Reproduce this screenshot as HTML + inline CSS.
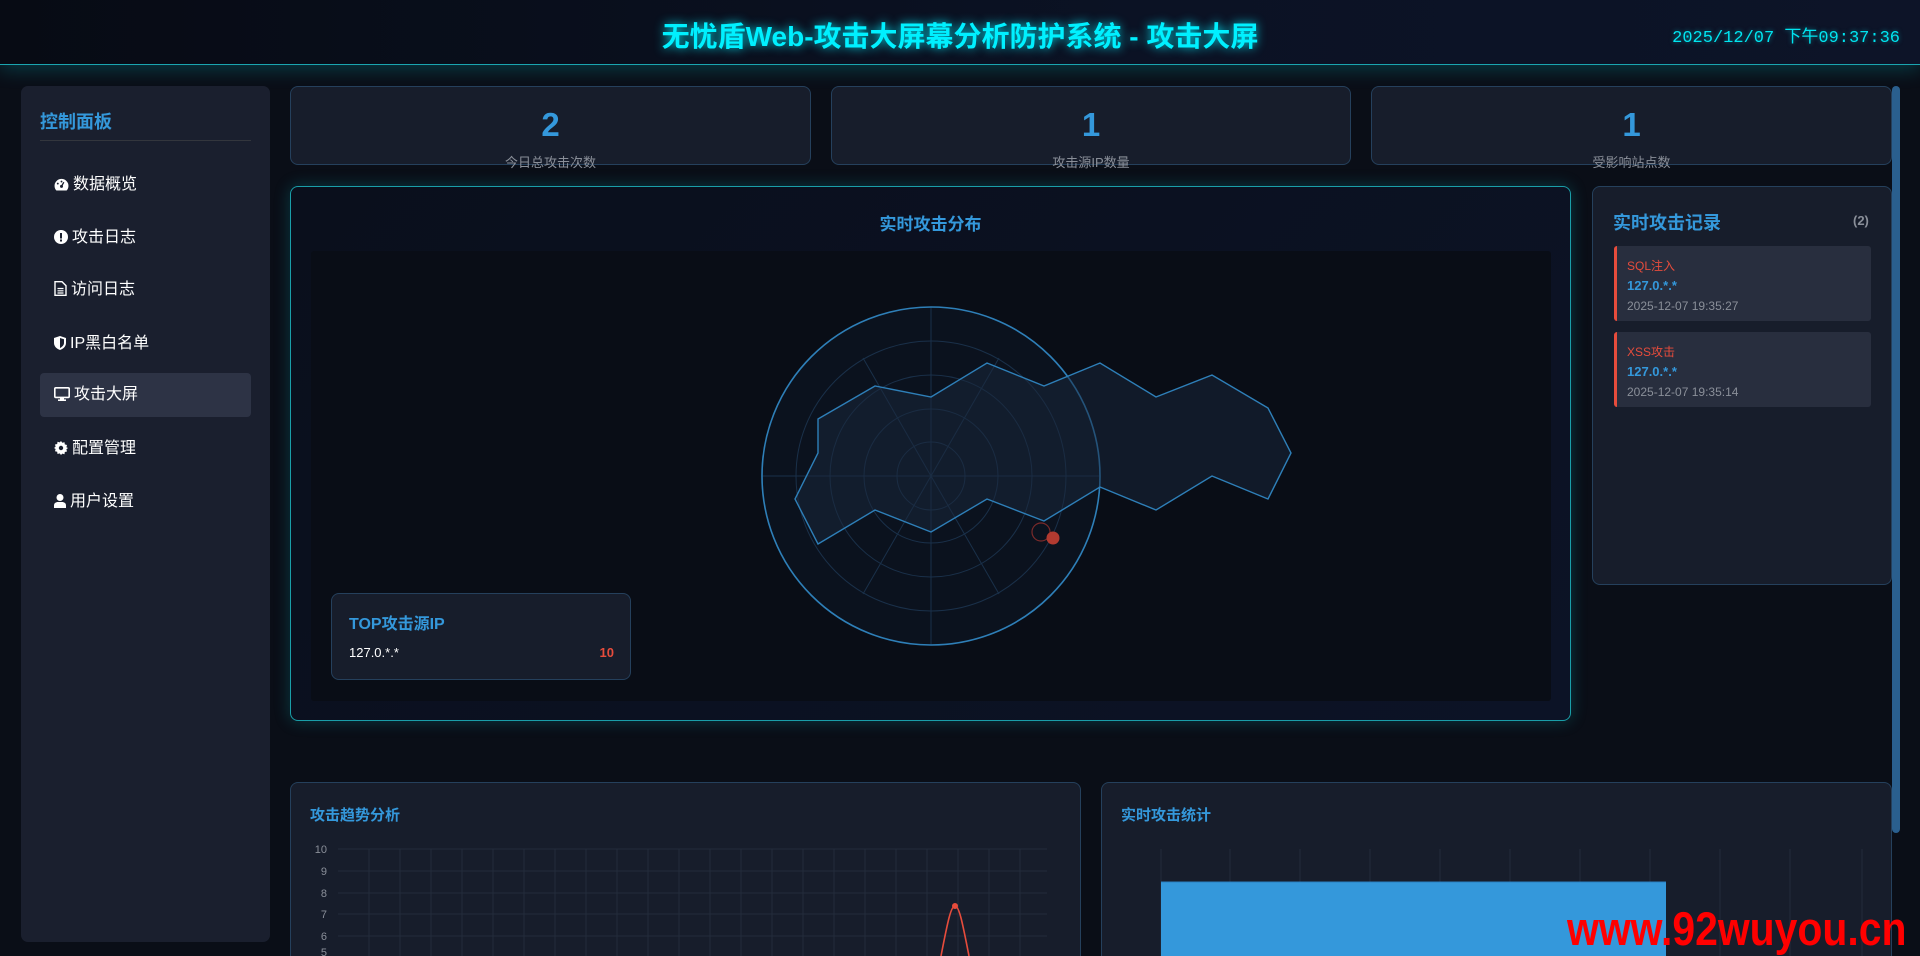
<!DOCTYPE html>
<html><head><meta charset="utf-8"><style>
*{margin:0;padding:0;box-sizing:border-box}
html,body{width:1920px;height:956px;overflow:hidden}
body{background:#0a0e17;font-family:"Liberation Sans","Noto Sans CJK SC",sans-serif;position:relative;color:#fff}
.hdr{position:absolute;left:0;top:0;width:1920px;height:65px;background:linear-gradient(90deg,#070b14,#0b1224 60%,#0d1428);border-bottom:1px solid #1aa5b0;box-shadow:0 4px 18px rgba(0,200,210,.25)}
.hdr h1{position:absolute;left:0;right:0;top:15px;text-align:center;font-size:28px;font-weight:bold;color:#00f0ff;text-shadow:0 0 10px rgba(0,240,255,.9)}
.hdr .dt{position:absolute;right:20px;top:22px;font-family:"Liberation Mono","Noto Sans CJK SC",monospace;font-size:17px;color:#00e5f0;text-shadow:0 0 5px rgba(0,230,240,.5)}
.side{position:absolute;left:21px;top:86px;width:249px;height:856px;background:#1a1f2e;border-radius:7px}
.side h2{position:absolute;left:19px;top:22px;font-size:18px;color:#3498db;font-weight:bold}
.side .ln{position:absolute;left:19px;right:19px;top:54px;border-top:1px solid #33363d}
.mi{position:absolute;left:19px;width:211px;height:44px;line-height:44px;padding-left:14px;font-size:16px;color:#fff;border-radius:4px}
.mi.act{background:#2d3345}
.mi svg{vertical-align:-2px;margin-right:4px}
.card{position:absolute;background:#171d2b;border:1px solid #25405c;border-radius:8px}
.stat .n{position:absolute;left:0;right:0;top:19px;text-align:center;font-size:33px;font-weight:bold;color:#3498db}
.stat .l{position:absolute;left:0;right:0;top:65px;text-align:center;font-size:13px;color:#8a8f99}
.radar{position:absolute;left:290px;top:186px;width:1281px;height:535px;background:linear-gradient(135deg,#0a0f1c,#0c1326);border:1px solid #1a9ea8;border-radius:8px;box-shadow:0 0 16px rgba(0,190,200,.25)}
.radar .t{position:absolute;left:0;right:0;top:23px;text-align:center;font-size:17px;font-weight:bold;color:#3498db}
.ttl{position:absolute;font-size:16px;font-weight:bold;color:#3498db}
.rec{position:absolute;left:1614px;width:257px;height:75px;background:#282e3e;border-left:3px solid #e74c3c;border-radius:3px}
.rec .a{position:absolute;left:10px;top:11px;font-size:12px;color:#e74c3c}
.rec .b{position:absolute;left:10px;top:32px;font-size:13px;font-weight:bold;color:#3498db}
.rec .c{position:absolute;left:10px;top:53px;font-size:12px;color:#8a8f99}
.bot{height:174px;border-bottom:none;border-radius:8px 8px 0 0}
</style></head><body>
<div class="hdr"><h1>无忧盾Web-攻击大屏幕分析防护系统 - 攻击大屏</h1><div class="dt">2025/12/07 下午09:37:36</div></div>

<div class="side">
<h2>控制面板</h2><div class="ln"></div>
<div class="mi" style="top:77px"><svg width="15" height="13" viewBox="0 0 16 14"><path d="M8 1A7.5 7.5 0 0 0 .5 8.5c0 2 .8 3.8 2 5h11c1.2-1.2 2-3 2-5A7.5 7.5 0 0 0 8 1z" fill="#fff"/><circle cx="8" cy="9" r="1.6" fill="#1a1f2e"/><path d="M8 9 10.5 4.5" stroke="#1a1f2e" stroke-width="1.4"/><circle cx="4" cy="6" r="1" fill="#1a1f2e"/><circle cx="8" cy="3.8" r="1" fill="#1a1f2e"/></svg>数据概览</div>
<div class="mi" style="top:130px"><svg width="14" height="14" viewBox="0 0 14 14"><circle cx="7" cy="7" r="7" fill="#fff"/><rect x="6" y="3" width="2" height="5.5" fill="#1a1f2e"/><rect x="6" y="9.5" width="2" height="2" fill="#1a1f2e"/></svg>攻击日志</div>
<div class="mi" style="top:182px"><svg width="13" height="15" viewBox="0 0 13 15"><path d="M1 .7h7l4 4v9.6H1z" fill="none" stroke="#fff" stroke-width="1.4"/><path d="M3.5 7.5h6M3.5 9.8h6M3.5 12h6" stroke="#fff" stroke-width="1.2"/></svg>访问日志</div>
<div class="mi" style="top:236px"><svg width="12" height="14" viewBox="0 0 12 14"><path d="M6 0 12 2v5c0 3.5-3 6-6 7-3-1-6-3.5-6-7V2z" fill="#fff"/><path d="M6 2v10c2-1 4-2.8 4-5V3.3z" fill="#1a1f2e"/></svg>IP黑白名单</div>
<div class="mi act" style="top:287px"><svg width="16" height="14" viewBox="0 0 16 14"><rect x=".8" y=".8" width="14.4" height="9.6" rx="1" fill="none" stroke="#fff" stroke-width="1.6"/><rect x="6" y="10.5" width="4" height="2" fill="#fff"/><rect x="4" y="12.4" width="8" height="1.6" fill="#fff"/></svg>攻击大屏</div>
<div class="mi" style="top:341px"><svg width="14" height="14" viewBox="0 0 14 14"><path d="M7 0l1.3 1.8 2.2-.6.3 2.2 2.2.6-.6 2.2L14 7l-1.6 1.3.6 2.2-2.2.5-.3 2.3-2.2-.7L7 14l-1.3-1.6-2.2.6-.3-2.2-2.2-.6.6-2.2L0 7l1.6-1.3L1 3.5l2.2-.5.3-2.2 2.2.6z" fill="#fff"/><circle cx="7" cy="7" r="2.2" fill="#1a1f2e"/></svg>配置管理</div>
<div class="mi" style="top:394px"><svg width="12" height="14" viewBox="0 0 12 14"><circle cx="6" cy="3.5" r="3.5" fill="#fff"/><path d="M0 14v-2.5C0 9 2 8 4 8h4c2 0 4 1 4 3.5V14z" fill="#fff"/></svg>用户设置</div>
</div>

<div class="card stat" style="left:290px;top:86px;width:521px;height:79px"><div class="n">2</div><div class="l">今日总攻击次数</div></div>
<div class="card stat" style="left:831px;top:86px;width:520px;height:79px"><div class="n">1</div><div class="l">攻击源IP数量</div></div>
<div class="card stat" style="left:1371px;top:86px;width:521px;height:79px"><div class="n">1</div><div class="l">受影响站点数</div></div>

<div class="radar"><div class="t">实时攻击分布</div>
<div style="position:absolute;left:20px;top:64px;width:1240px;height:450px;background:#090d16;border-radius:3px"></div>
</div>
<svg style="position:absolute;left:0;top:0" width="1920" height="956">
<g fill="none" stroke="#1c3550" stroke-width="1">
<circle cx="931" cy="476" r="34"/><circle cx="931" cy="476" r="67"/><circle cx="931" cy="476" r="101"/><circle cx="931" cy="476" r="135"/>
<path d="M931 307V645M762 476H1100M863 358 999 594M999 358 863 594"/>
</g>
<circle cx="931" cy="476" r="169" fill="rgba(20,35,55,.25)" stroke="#2e7fb8" stroke-width="1.6"/>
<polygon points="818,419 875,386 931,397 987,363 1044,386 1100,363 1156,397 1212,375 1268,408 1291,453 1268,499 1212,476 1156,510 1100,487 1044,521 987,499 931,532 875,510 818,544 795,499 818,453" fill="rgba(25,40,60,.5)" stroke="#2e7fb8" stroke-width="1.4"/>
<circle cx="1041" cy="532" r="9" fill="none" stroke="#7a2a2a" stroke-width="1.2"/>
<circle cx="1053" cy="538" r="6.5" fill="#b23a30"/>
</svg>
<div class="card" style="left:331px;top:593px;width:300px;height:87px;background:#171d2b">
<div style="position:absolute;left:17px;top:16px;font-size:16px;color:#3498db;font-weight:bold">TOP攻击源IP</div>
<div style="position:absolute;left:17px;top:51px;font-size:13px;color:#fff">127.0.*.*</div>
<div style="position:absolute;right:16px;top:51px;font-size:13px;color:#e74c3c;font-weight:bold">10</div>
</div>

<div class="card" style="left:1592px;top:186px;width:300px;height:399px"></div>
<div class="ttl" style="left:1613px;top:209px;font-size:18px">实时攻击记录</div>
<div style="position:absolute;left:1853px;top:213px;font-size:13px;font-weight:bold;color:#8a8f99">(2)</div>
<div class="rec" style="top:246px"><div class="a">SQL注入</div><div class="b">127.0.*.*</div><div class="c">2025-12-07 19:35:27</div></div>
<div class="rec" style="top:332px"><div class="a">XSS攻击</div><div class="b">127.0.*.*</div><div class="c">2025-12-07 19:35:14</div></div>

<div style="position:absolute;left:1892px;top:86px;width:8px;height:747px;background:#2a5f8e;border-radius:4px"></div>

<div class="card bot" style="left:290px;top:782px;width:791px"></div>
<div class="ttl" style="left:310px;top:804px;font-size:15px">攻击趋势分析</div>
<div class="card bot" style="left:1101px;top:782px;width:791px"></div>
<div class="ttl" style="left:1121px;top:804px;font-size:15px">实时攻击统计</div>

<svg style="position:absolute;left:0;top:0" width="1920" height="956">
<g stroke="#232b3b" stroke-width="1">
<path d="M338 849H1047M338 871H1047M338 893H1047M338 914H1047M338 936H1047"/>
<path d="M369 849V956M400 849V956M431 849V956M462 849V956M493 849V956M524 849V956M555 849V956M586 849V956M617 849V956M648 849V956M679 849V956M710 849V956M741 849V956M772 849V956M803 849V956M834 849V956M865 849V956M896 849V956M927 849V956M958 849V956M989 849V956M1020 849V956"/>
<path d="M1161 849V956M1230 849V956M1300 849V956M1370 849V956M1440 849V956M1510 849V956M1580 849V956M1650 849V956M1720 849V956M1790 849V956M1862 849V956"/>
</g>
<g font-family="Liberation Sans" font-size="11" fill="#8a8f99" text-anchor="end">
<text x="327" y="853">10</text><text x="327" y="875">9</text><text x="327" y="897">8</text><text x="327" y="918">7</text><text x="327" y="940">6</text><text x="327" y="956">5</text>
</g>
<path d="M941 956C948 920 951 906 955 906C959 906 962 920 969 956" fill="none" stroke="#e74c3c" stroke-width="1.6"/>
<circle cx="955" cy="906" r="3" fill="#e74c3c"/>
<rect x="1161" y="882" width="505" height="74" fill="#3498db"/>
<path d="M1161 882H1666" stroke="#2a7fc0"/>
</svg>
<div style="position:absolute;left:1567px;top:904px;height:52px;overflow:hidden;font-family:'Liberation Sans Narrow','Liberation Sans',sans-serif;font-weight:bold;font-size:44px;line-height:48px;color:#ff0000;transform:scale(.93,1.08);transform-origin:left top;white-space:nowrap">www.92wuyou.cn</div>
</body></html>
